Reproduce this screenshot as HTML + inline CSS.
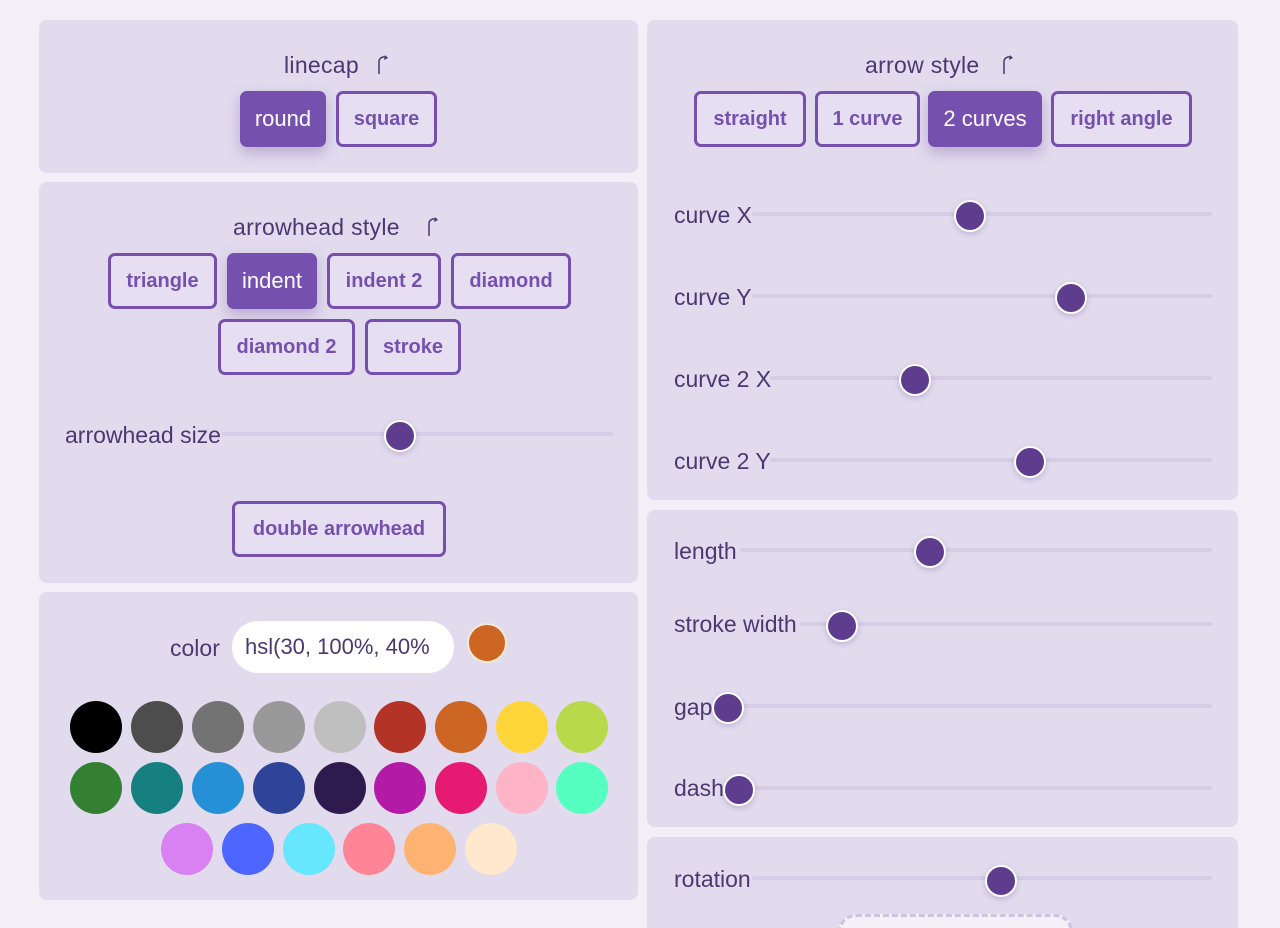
<!DOCTYPE html>
<html><head><style>
html{overflow:hidden}
body{margin:0;width:1280px;height:928px;background:#f2eff7;font-family:"Liberation Sans",sans-serif;position:relative;overflow:hidden;color:#4a3870}
.p{position:absolute;background:#e2dbee;border-radius:8px}
.b{position:absolute;box-sizing:border-box;border:3px solid #7650ae;border-radius:7px;color:#7650ae;font-weight:bold;font-size:20px;display:flex;align-items:center;justify-content:center;background:#e6dff1}
.b.on{background:#7650ae;color:#fff;font-weight:normal;font-size:22px;box-shadow:0 6px 14px rgba(90,60,140,.3)}
.t{position:absolute;font-size:23px;letter-spacing:.3px;color:#4a3870;white-space:nowrap}
.l{position:absolute;font-size:23px;color:#4a3870;white-space:nowrap}
.tr{position:absolute;height:4px;background:#d5cce6;border-radius:2px}
.th{position:absolute;width:28px;height:28px;border-radius:50%;background:#5e3d8f;border:2px solid #fff;box-sizing:content-box;box-shadow:0 2px 6px rgba(80,50,130,.25)}
.c{position:absolute;width:52px;height:52px;border-radius:50%}
</style></head><body>
<div class="p" style="left:39px;top:20px;width:599px;height:153px"></div>
<div class="p" style="left:39px;top:182px;width:599px;height:401px"></div>
<div class="p" style="left:39px;top:592px;width:599px;height:308px"></div>
<div class="p" style="left:647px;top:20px;width:591px;height:480px"></div>
<div class="p" style="left:647px;top:510px;width:591px;height:317px"></div>
<div class="p" style="left:647px;top:837px;width:591px;height:91px;border-radius:8px 8px 0 0"></div>

<div class="t" style="left:284px;top:52px">linecap</div>
<svg style="position:absolute;left:376px;top:53px" width="14" height="22"><path d="M3 21V8a5 5 0 0 1 8-3" fill="none" stroke="#4a3870" stroke-width="1.5"/><path d="M9 2l3 3-4 2z" fill="#4a3870"/></svg>
<div class="b on" style="left:240px;top:91px;width:86px;height:56px">round</div>
<div class="b" style="left:336px;top:91px;width:101px;height:56px">square</div>

<div class="t" style="left:233px;top:214px">arrowhead style</div>
<svg style="position:absolute;left:426px;top:215px" width="14" height="22"><path d="M3 21V8a5 5 0 0 1 8-3" fill="none" stroke="#4a3870" stroke-width="1.5"/><path d="M9 2l3 3-4 2z" fill="#4a3870"/></svg>
<div class="b" style="left:108px;top:253px;width:109px;height:56px">triangle</div>
<div class="b on" style="left:227px;top:253px;width:90px;height:56px">indent</div>
<div class="b" style="left:327px;top:253px;width:114px;height:56px">indent 2</div>
<div class="b" style="left:451px;top:253px;width:120px;height:56px">diamond</div>
<div class="b" style="left:218px;top:319px;width:137px;height:56px">diamond 2</div>
<div class="b" style="left:365px;top:319px;width:96px;height:56px">stroke</div>
<div class="l" style="left:65px;top:422px">arrowhead size</div>
<div class="tr" style="left:222px;top:432px;width:391px"></div>
<div class="th" style="left:384px;top:420px"></div>
<div class="b" style="left:232px;top:501px;width:214px;height:56px">double arrowhead</div>

<div class="l" style="left:170px;top:635px">color</div>
<div style="position:absolute;left:232px;top:621px;width:222px;height:52px;border-radius:26px;background:#fff;font-size:22px;line-height:52px;text-indent:13px;color:#4a3870">hsl(30, 100%, 40%</div>
<div style="position:absolute;left:467px;top:623px;width:36px;height:36px;border-radius:50%;background:#cc6622;border:2px solid #f3ead8"></div>

<div class="c" style="left:70px;top:701px;background:#000"></div>
<div class="c" style="left:131px;top:701px;background:#4d4d4d"></div>
<div class="c" style="left:192px;top:701px;background:#737373"></div>
<div class="c" style="left:253px;top:701px;background:#999"></div>
<div class="c" style="left:314px;top:701px;background:#bfbfbf"></div>
<div class="c" style="left:374px;top:701px;background:#b33326"></div>
<div class="c" style="left:435px;top:701px;background:#cc6622"></div>
<div class="c" style="left:496px;top:701px;background:#ffd53a"></div>
<div class="c" style="left:556px;top:701px;background:#b8d94a"></div>
<div class="c" style="left:70px;top:762px;background:#338033"></div>
<div class="c" style="left:131px;top:762px;background:#168080"></div>
<div class="c" style="left:192px;top:762px;background:#2690d6"></div>
<div class="c" style="left:253px;top:762px;background:#2e4499"></div>
<div class="c" style="left:314px;top:762px;background:#2e1a4d"></div>
<div class="c" style="left:374px;top:762px;background:#b31aa6"></div>
<div class="c" style="left:435px;top:762px;background:#e61a73"></div>
<div class="c" style="left:496px;top:762px;background:#ffb3c6"></div>
<div class="c" style="left:556px;top:762px;background:#55ffc0"></div>
<div class="c" style="left:161px;top:823px;background:#d980f2"></div>
<div class="c" style="left:222px;top:823px;background:#4d66ff"></div>
<div class="c" style="left:283px;top:823px;background:#66e6ff"></div>
<div class="c" style="left:343px;top:823px;background:#ff8496"></div>
<div class="c" style="left:404px;top:823px;background:#ffb373"></div>
<div class="c" style="left:465px;top:823px;background:#ffe8cc"></div>

<div class="t" style="left:865px;top:52px">arrow style</div>
<svg style="position:absolute;left:1001px;top:53px" width="14" height="22"><path d="M3 21V8a5 5 0 0 1 8-3" fill="none" stroke="#4a3870" stroke-width="1.5"/><path d="M9 2l3 3-4 2z" fill="#4a3870"/></svg>
<div class="b" style="left:694px;top:91px;width:112px;height:56px">straight</div>
<div class="b" style="left:815px;top:91px;width:105px;height:56px">1 curve</div>
<div class="b on" style="left:928px;top:91px;width:114px;height:56px">2 curves</div>
<div class="b" style="left:1051px;top:91px;width:141px;height:56px">right angle</div>

<div class="l" style="left:674px;top:202px">curve X</div>
<div class="tr" style="left:752px;top:212px;width:460px"></div><div class="th" style="left:954px;top:200px"></div>
<div class="l" style="left:674px;top:284px">curve Y</div>
<div class="tr" style="left:752px;top:294px;width:460px"></div><div class="th" style="left:1055px;top:282px"></div>
<div class="l" style="left:674px;top:366px">curve 2 X</div>
<div class="tr" style="left:770px;top:376px;width:442px"></div><div class="th" style="left:899px;top:364px"></div>
<div class="l" style="left:674px;top:448px">curve 2 Y</div>
<div class="tr" style="left:770px;top:458px;width:442px"></div><div class="th" style="left:1014px;top:446px"></div>

<div class="l" style="left:674px;top:538px">length</div>
<div class="tr" style="left:740px;top:548px;width:472px"></div><div class="th" style="left:914px;top:536px"></div>
<div class="l" style="left:674px;top:611px">stroke width</div>
<div class="tr" style="left:800px;top:622px;width:412px"></div><div class="th" style="left:826px;top:610px"></div>
<div class="l" style="left:674px;top:694px">gap</div>
<div class="tr" style="left:712px;top:704px;width:500px"></div><div class="th" style="left:712px;top:692px"></div>
<div class="l" style="left:674px;top:775px">dash</div>
<div class="tr" style="left:724px;top:786px;width:488px"></div><div class="th" style="left:723px;top:774px"></div>

<div class="l" style="left:674px;top:866px">rotation</div>
<div class="tr" style="left:752px;top:876px;width:460px"></div><div class="th" style="left:985px;top:865px"></div>
<div style="position:absolute;left:838px;top:914px;width:235px;height:40px;box-sizing:border-box;border:3px dashed #cfc3e3;border-radius:18px;background:#f3f0f8"></div>
</body></html>
